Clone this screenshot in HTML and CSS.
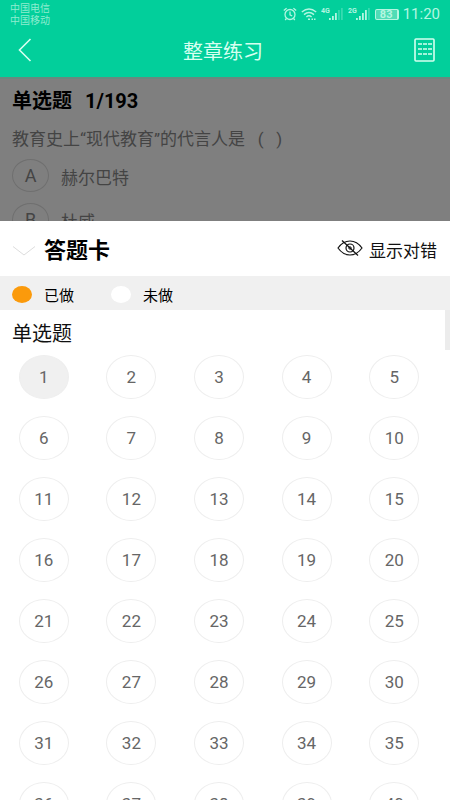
FILE: index.html
```html
<!DOCTYPE html>
<html lang="zh-CN">
<head>
    <meta charset="UTF-8" />
    <meta name="viewport" content="width=device-width, initial-scale=1" />
    <title>整章练习</title>
    <link rel="stylesheet" href="styles.css">
</head>
<body>

    <header class="top">
        <div class="status">
            <div class="carriers">
                <span>中国电信</span>
                <span>中国移动</span>
            </div>
            <div class="status-icons">
                <svg width="14" height="14" viewBox="0 0 14 14" fill="none" stroke="currentColor" stroke-width="1.3">
                    <circle cx="7" cy="7.5" r="5" />
                    <path d="M7 4.5v3.3l2.2 1.2M.8 3.6 3.6 1.2M13.2 3.6 10.4 1.2M3.4 11.5 2.2 13M10.6 11.5l1.2 1.5" />
                </svg>
                <svg width="16" height="14" viewBox="0 0 16 14" fill="none" stroke="currentColor" stroke-width="1.4">
                    <path d="M.8 5Q8-1 15.2 5M3 7.6Q8 3.2 13 7.6M5.4 10Q8 7.6 10.6 10" />
                    <path d="M7 12.2h2M10.5 12.2h1.5M13 12.2h1.5" stroke-width="1.6" />
                </svg>
                <svg width="23" height="14" viewBox="0 0 23 14" fill="currentColor">
                    <text class="net" x="0" y="6">4G</text>
                    <path d="M8 11h1.8v2H8zM11 9h1.8v4H11zM14 6h1.8v7H14z" />
                    <path d="M17 3h1.8v10H17zM20 1h1.8v12H20z" opacity=".3" />
                </svg>
                <svg width="23" height="14" viewBox="0 0 23 14" fill="currentColor">
                    <text class="net" x="0" y="6">2G</text>
                    <path d="M8 11h1.8v2H8zM11 9h1.8v4H11zM14 6h1.8v7H14zM17 3h1.8v10H17z" />
                    <path d="M20 1h1.8v12H20z" opacity=".3" />
                </svg>
                <span class="battery">83</span>
                <span class="clock">11:20</span>
            </div>
        </div>
        <div class="nav">
            <button class="icon-btn" aria-label="返回">
                <svg width="14" height="24" viewBox="0 0 14 24" fill="none" stroke="currentColor" stroke-width="1.6">
                    <path d="M12.5 1 1.5 12l11 11" />
                </svg>
            </button>
            <h1>整章练习</h1>
            <button class="icon-btn" aria-label="答题卡">
                <svg width="22" height="24" viewBox="0 0 22 24" fill="none" stroke="currentColor" stroke-width="1.6">
                    <rect x="1" y="1" width="19" height="22" rx="1" />
                    <path d="M4 6h14M4 11h14M4 16h14" stroke-dasharray="4 1" />
                </svg>
            </button>
        </div>
    </header>

    <main class="question">
        <h2>单选题 <span>1/193</span></h2>
        <p>教育史上“现代教育”的代言人是&nbsp;&nbsp;&nbsp;(&nbsp;&nbsp;&nbsp;)</p>
        <button class="option"><span class="letter">A</span><span class="answer">赫尔巴特</span></button>
        <button class="option"><span class="letter">B</span><span class="answer">杜威</span></button>
    </main>

    <section class="sheet">
        <div class="sheet-head">
            <button class="icon-btn close" aria-label="收起">
                <svg width="24" height="12" viewBox="0 0 24 12" fill="none" stroke="currentColor">
                    <path d="M1 1.5 12 10 23 1.5" />
                </svg>
            </button>
            <h2>答题卡</h2>
            <button class="toggle">
                <svg width="26" height="18" viewBox="0 0 26 18" fill="none" stroke="currentColor" stroke-width="1.2">
                    <path d="M1 9Q6 2 13 2t12 7q-5 7-12 7T1 9z" />
                    <circle cx="13" cy="9" r="4" />
                    <circle cx="13" cy="9" r="1.2" stroke-width="1" />
                    <path d="M5 1.5 21 16.5" />
                </svg>
                <span>显示对错</span>
            </button>
        </div>
        <div class="legend">
            <span class="legend-item done">已做</span>
            <span class="legend-item">未做</span>
        </div>
        <div class="list">
            <h3>单选题</h3>
            <div class="numbers" id="numbers"></div>
            <div class="thumb"></div>
        </div>
    </section>

<script>
const total = 193;
const numbers = document.getElementById('numbers');

for (let i = 1; i <= total; i++) {
    const btn = document.createElement('button');
    btn.className = i === 1 ? 'num current' : 'num';
    btn.textContent = i;
    numbers.appendChild(btn);
}
</script>

</body>
</html>
```
FILE: styles.css
```css
* { box-sizing: border-box; }
body { margin: 0; height: 100vh; display: flex; flex-direction: column; overflow: hidden; background: #fff; font-family: Roboto, "Noto Sans CJK SC", sans-serif; }
h1, h2, h3, p { margin: 0; }
button { padding: 0; border: none; background: none; font: inherit; color: inherit; cursor: pointer; }
svg { display: block; }

/* header */
.top { flex: none; background: #02cf9b; color: #d6fff0; border-bottom: 2px solid #68897f; }
.status { display: flex; justify-content: space-between; align-items: flex-start; height: 28px; padding: 2px 10px 0; }
.carriers { display: flex; flex-direction: column; padding-top: 1px; font-size: 10px; line-height: 12px; color: #8eeccf; }
.status-icons { display: flex; align-items: center; gap: 4px; color: #b4f6e1; }
.net { font-size: 7px; font-weight: bold; }
.battery { width: 24px; border: 1px solid currentColor; border-right-width: 2px; border-radius: 2px; background: #4fdcb6; font-size: 11px; line-height: 9px; font-weight: bold; text-align: center; }
.clock { font-size: 15px; line-height: 24px; }
.nav { display: flex; align-items: center; justify-content: space-between; height: 49px; padding: 0 14px 6px 18px; }
.nav h1 { padding-top: 4px; font-size: 20px; line-height: 28px; font-weight: normal; }

/* question behind the answer card */
.question { flex: none; height: 142px; padding: 8px 12px 0; overflow: hidden; background: #7f7f7f; color: #444; font-size: 17px; }
.question h2 { font-size: 20px; line-height: 28px; color: #000; }
.question h2 span { margin-left: 8px; }
.question p { margin: 12px 0 8px; line-height: 24px; }
.option { display: flex; align-items: center; gap: 12px; width: 100%; height: 32px; margin-bottom: 12px; }
.letter { width: 37px; height: 33px; border: 1px solid #6f6f6f; border-radius: 50%; line-height: 31px; font-size: 18px; }
.answer { padding-top: 2px; }

/* answer card */
.sheet { flex: 1; min-height: 0; display: flex; flex-direction: column; background: #fff; }
.sheet-head { flex: none; display: flex; align-items: center; height: 55px; padding: 4px 13px 0 12px; }
.sheet-head h2 { margin-left: 8px; font-size: 22px; line-height: 30px; }
.close { color: #ddd; }
.toggle { display: flex; align-items: flex-start; gap: 6px; margin-left: auto; font-size: 17px; line-height: 24px; color: #111; }
.legend { flex: none; display: flex; align-items: center; gap: 37px; height: 34px; padding: 2px 12px 0; background: #f0f0f0; font-size: 15px; }
.legend-item { display: flex; align-items: center; gap: 12px; }
.legend-item::before { content: ""; width: 20px; height: 17px; border-radius: 50%; background: #fff; }
.done::before { background: #fb9a0b; }
.list { position: relative; flex: 1; min-height: 0; overflow-y: auto; scrollbar-width: none; }
.list h3 { padding: 10px 12px 7px; font-size: 20px; line-height: 28px; font-weight: normal; color: #111; }
.numbers { display: grid; grid-template-columns: repeat(5, 1fr); justify-items: center; row-gap: 17px; padding-right: 12px; }
.num { width: 50px; height: 44px; border: 1px solid #eee; border-radius: 50%; font-size: 17px; color: #666; }
.current { background: #f0f0f0; }
.thumb { position: absolute; top: 0; right: 0; width: 5px; height: 40px; background: #ececec; }
```
